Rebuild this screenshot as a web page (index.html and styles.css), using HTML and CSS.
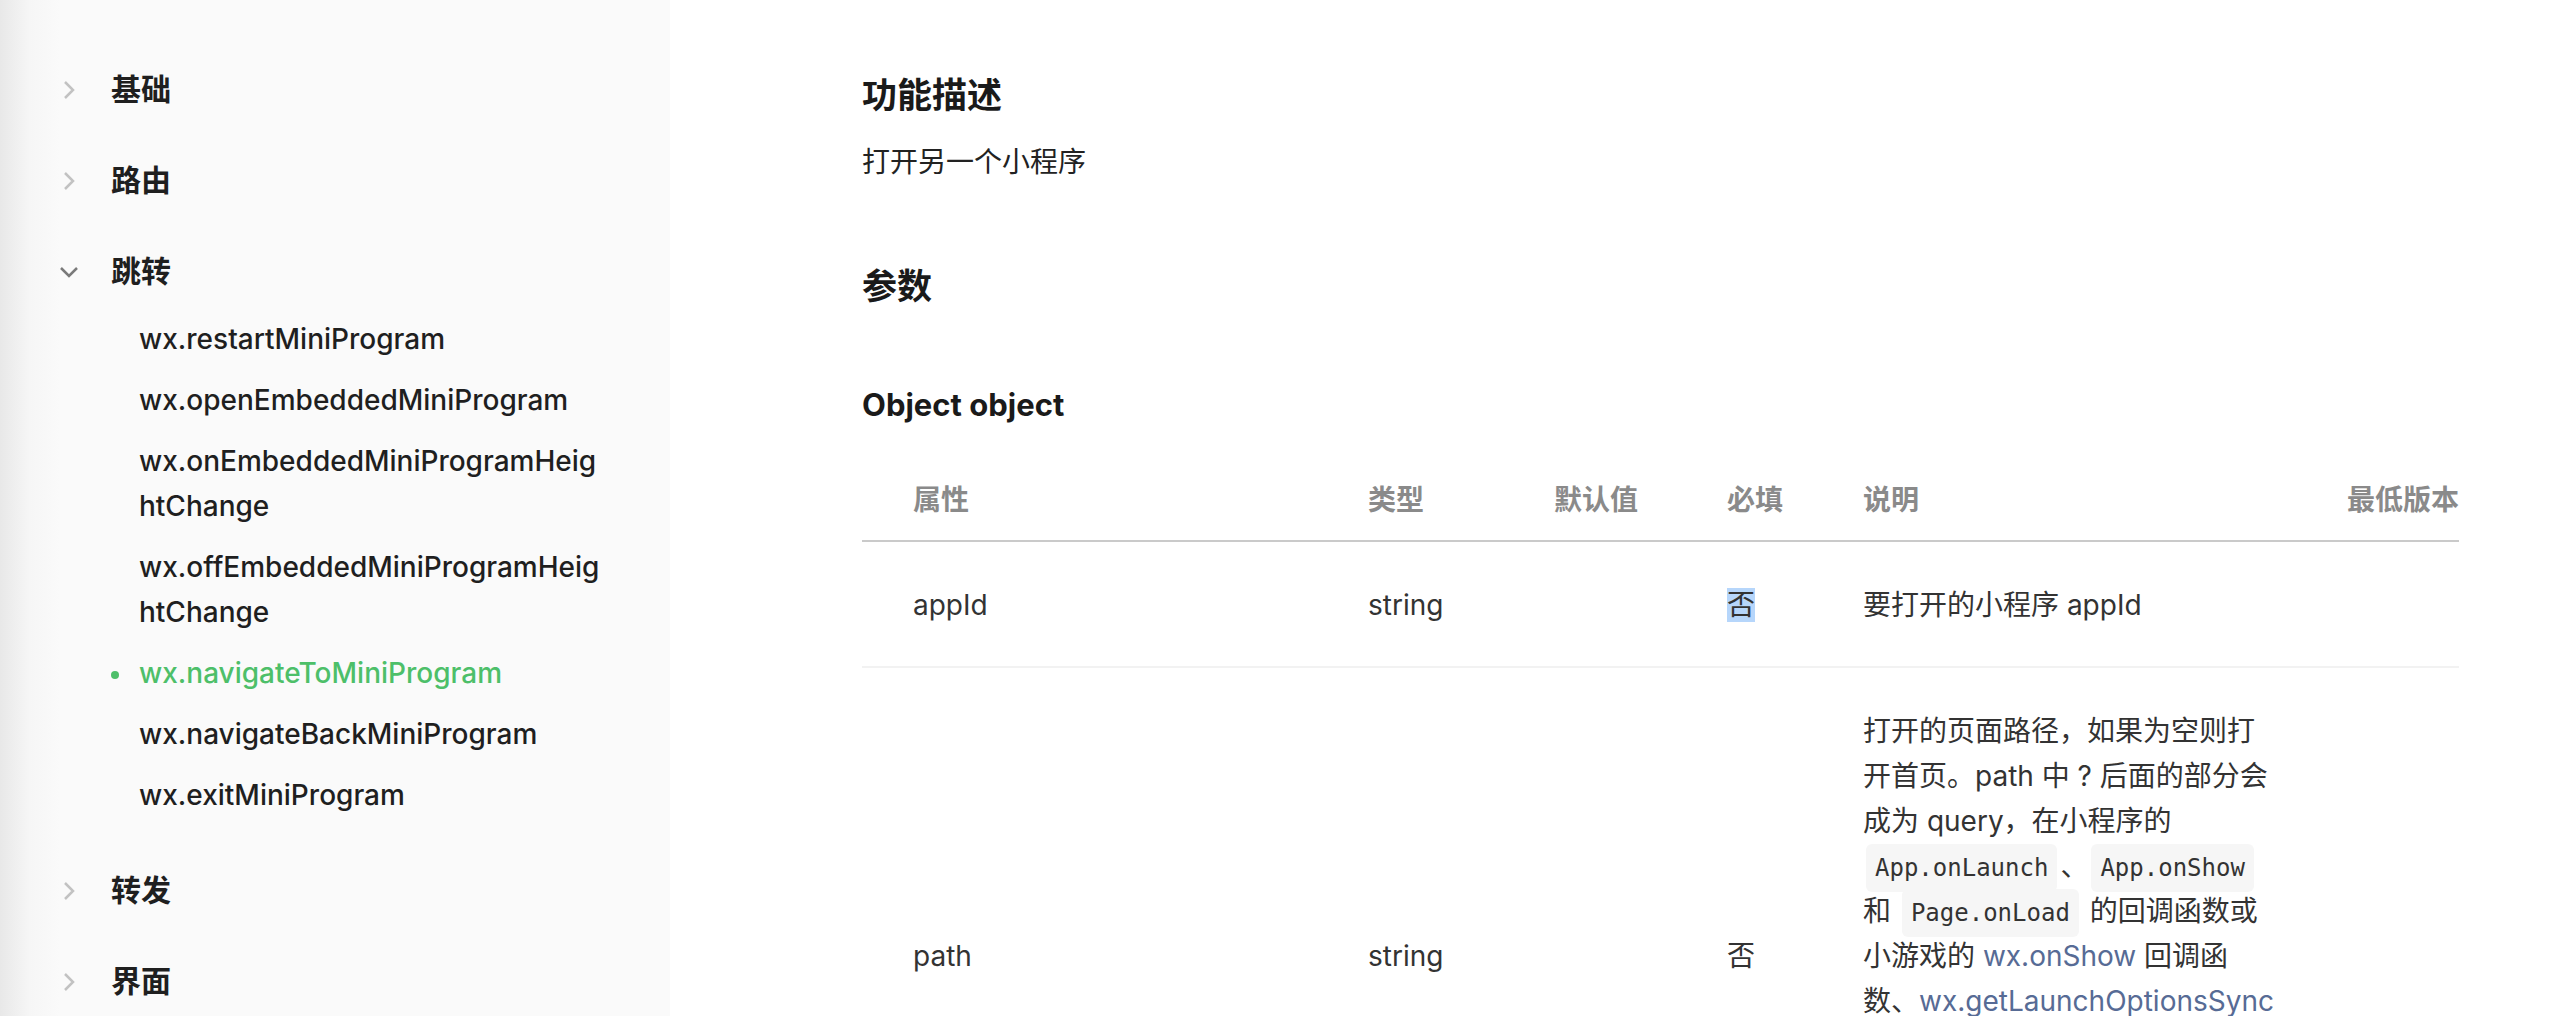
FILE: index.html
```html
<!DOCTYPE html>
<html lang="zh-CN">
<head>
    <meta charset="UTF-8">
    <meta name="viewport" content="width=device-width, initial-scale=1.0">
    <title>wx.navigateToMiniProgram</title>
    <link rel="stylesheet" href="styles.css">
</head>
<body>
    <aside class="sidebar">
        <div class="nav-group">
            <div class="nav-title">
                <span class="arrow"><svg width="12" height="20" viewBox="0 0 12 20"><path d="M2 2 L10 10 L2 18" /></svg></span>
                <span>基础</span>
            </div>
        </div>
        <div class="nav-group">
            <div class="nav-title">
                <span class="arrow"><svg width="12" height="20" viewBox="0 0 12 20"><path d="M2 2 L10 10 L2 18" /></svg></span>
                <span>路由</span>
            </div>
        </div>
        <div class="nav-group open">
            <div class="nav-title">
                <span class="arrow"><svg width="20" height="12" viewBox="0 0 20 12"><path d="M2 2 L10 10 L18 2" /></svg></span>
                <span>跳转</span>
            </div>
            <ul class="nav-list">
                <li><a href="#">wx.restartMiniProgram</a></li>
                <li><a href="#">wx.openEmbeddedMiniProgram</a></li>
                <li><a href="#">wx.onEmbeddedMiniProgramHeightChange</a></li>
                <li><a href="#">wx.offEmbeddedMiniProgramHeightChange</a></li>
                <li class="active"><a href="#">wx.navigateToMiniProgram</a></li>
                <li><a href="#">wx.navigateBackMiniProgram</a></li>
                <li><a href="#">wx.exitMiniProgram</a></li>
            </ul>
        </div>
        <div class="nav-group">
            <div class="nav-title">
                <span class="arrow"><svg width="12" height="20" viewBox="0 0 12 20"><path d="M2 2 L10 10 L2 18" /></svg></span>
                <span>转发</span>
            </div>
        </div>
        <div class="nav-group">
            <div class="nav-title">
                <span class="arrow"><svg width="12" height="20" viewBox="0 0 12 20"><path d="M2 2 L10 10 L2 18" /></svg></span>
                <span>界面</span>
            </div>
        </div>
    </aside>

    <main class="content">
        <h2>功能描述</h2>
        <p class="desc">打开另一个小程序</p>

        <h2 class="params">参数</h2>
        <h3>Object object</h3>

        <table class="param-table">
            <colgroup>
                <col class="c-name">
                <col class="c-type">
                <col class="c-default">
                <col class="c-required">
                <col class="c-desc">
                <col class="c-version">
            </colgroup>
            <thead>
                <tr>
                    <th>属性</th>
                    <th>类型</th>
                    <th>默认值</th>
                    <th>必填</th>
                    <th>说明</th>
                    <th>最低版本</th>
                </tr>
            </thead>
            <tbody>
                <tr>
                    <td>appId</td>
                    <td>string</td>
                    <td></td>
                    <td><span class="selected">否</span></td>
                    <td>要打开的小程序 appId</td>
                    <td></td>
                </tr>
                <tr>
                    <td>path</td>
                    <td>string</td>
                    <td></td>
                    <td>否</td>
                    <td>打开的页面路径，如果为空则打开首页。path 中 ? 后面的部分会成为 query，在小程序的 <code>App.onLaunch</code>、<code>App.onShow</code> 和 <code>Page.onLoad</code> 的回调函数或小游戏的 <a href="#">wx.onShow</a> 回调函数、<a href="#">wx.getLaunchOptionsSync</a> 中可以获取到 query 数据。对于小游戏，可以只传入 query 部分，来实现传参效果，如：传入 "?foo=bar"。</td>
                    <td></td>
                </tr>
            </tbody>
        </table>
    </main>
</body>
</html>
```

FILE: styles.css
```css
* {
    margin: 0;
    padding: 0;
    box-sizing: border-box;
}

body {
    display: flex;
    height: 1016px;
    overflow: hidden;
    font-family: Inter, "Noto Sans CJK SC", sans-serif;
    color: #222;
    background: #fff;
}

a {
    text-decoration: none;
}

/* sidebar */
.sidebar {
    flex: 0 0 670px;
    padding: 44px 64px 0 59px;
    background: linear-gradient(to right, #e8e8e8 0, #f6f6f6 30px, #fafafa 60px);
}

.nav-title {
    display: flex;
    align-items: center;
    gap: 32px;
    padding: 23px 0;
    line-height: 45px;
    font-size: 30px;
    font-weight: 700;
    color: #1f1f1f;
}

.arrow {
    display: flex;
    justify-content: center;
    width: 20px;
}

.arrow svg path {
    fill: none;
    stroke: #c2c2c2;
    stroke-width: 2.5;
}

.open .arrow svg path {
    stroke: #7a7a7a;
}

.nav-list {
    list-style: none;
    margin: -8px 0 19px 80px;
}

.nav-list li {
    position: relative;
    padding: 8px 0;
    line-height: 45px;
    font-size: 28px;
    font-weight: 500;
    word-break: break-all;
}

.nav-list li a {
    color: #1f1f1f;
}

.nav-list li.active a {
    color: #4dbf69;
}

.nav-list li.active::before {
    content: "";
    position: absolute;
    left: -28px;
    top: 28px;
    width: 8px;
    height: 8px;
    border-radius: 50%;
    background: #4dbf69;
}

/* content */
.content {
    flex: 1;
    padding: 70px 103px 0 192px;
}

.content h2 {
    font-size: 35px;
    line-height: 50px;
    font-weight: 700;
    color: #1a1a1a;
}

.desc {
    margin-top: 19px;
    font-size: 28px;
    line-height: 46px;
    color: #222;
}

.params {
    margin-top: 76px;
}

.content h3 {
    margin-top: 71px;
    font-size: 31px;
    line-height: 46px;
    font-weight: 700;
    color: #1a1a1a;
}

.param-table {
    width: 100%;
    margin-top: 32px;
    border-collapse: collapse;
    table-layout: fixed;
    font-size: 28px;
    line-height: 45px;
}

.c-name { width: 465px; }
.c-type { width: 186px; }
.c-default { width: 173px; }
.c-required { width: 136px; }
.c-desc { width: 484px; }
.c-version { width: 153px; }

.param-table th {
    padding: 18px 28px 17px 41px;
    text-align: left;
    font-weight: 600;
    color: #8a8a8a;
    border-bottom: 2px solid #cacaca;
}

.param-table td {
    padding: 41px 28px 38px 41px;
    color: #333;
    border-bottom: 2px solid #f2f2f2;
    vertical-align: middle;
}

.param-table th:first-child,
.param-table td:first-child {
    padding-left: 51px;
}

.param-table th:last-child,
.param-table td:last-child {
    padding-right: 0;
}

.selected {
    background: #b6d6fb;
}

.param-table code {
    padding: 10px 9px;
    margin: 0 3px;
    border-radius: 6px;
    background: #f6f6f6;
    font-family: "DejaVu Sans Mono", monospace;
    font-size: 24px;
    line-height: 1;
    color: #333;
}

.param-table td a {
    color: #576b95;
}
```
